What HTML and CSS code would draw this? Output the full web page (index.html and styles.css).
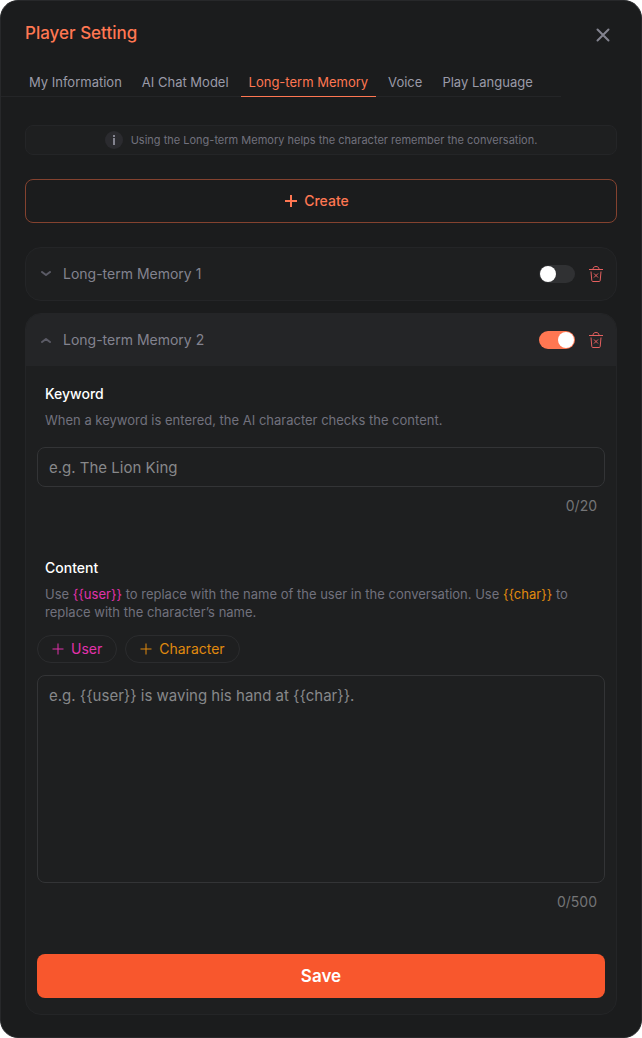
FILE: index.html
```
<!DOCTYPE html>
<html lang="en">

<head>
    <meta charset="UTF-8">
    <meta name="viewport" content="width=device-width, initial-scale=1.0">
    <title>Player Setting</title>
    <link rel="stylesheet" href="styles.css">
</head>

<body>
    <div class="modal">
        <header class="modal-header">
            <h1 class="modal-title">Player Setting</h1>
            <button class="icon-btn close-btn" type="button" aria-label="Close">
                <svg width="14" height="14" viewBox="0 0 14 14" fill="none" stroke="#83838f" stroke-width="2" stroke-linecap="round">
                    <path d="M1.5 1.5l11 11M12.5 1.5l-11 11" />
                </svg>
            </button>
        </header>

        <nav class="tabs">
            <a class="tab" href="#">My Information</a>
            <a class="tab" href="#">AI Chat Model</a>
            <a class="tab active" href="#">Long-term Memory</a>
            <a class="tab" href="#">Voice</a>
            <a class="tab" href="#">Play Language</a>
        </nav>

        <main class="content">
            <p class="notice">
                <svg width="18" height="18" viewBox="0 0 18 18">
                    <circle cx="9" cy="9" r="9" fill="#2b2b2f" />
                    <path d="M8 4h2v2H8zM8 7h2v7H8z" fill="#83838f" />
                </svg>
                Using the Long-term Memory helps the character remember the conversation.
            </p>

            <button class="create-btn" type="button">
                <svg width="12" height="12" viewBox="0 0 12 12" stroke="currentColor" stroke-width="2">
                    <path d="M6 0v12M0 6h12" />
                </svg>
                Create
            </button>

            <div class="memory-list">
                <section class="memory">
                    <div class="memory-header">
                        <button class="memory-toggle" type="button" aria-expanded="false">
                            <svg width="10" height="6" viewBox="0 0 10 6" fill="none" stroke="#5b5b66" stroke-width="2" stroke-linecap="round" stroke-linejoin="round">
                                <path d="M1 1l4 3 4-3" />
                            </svg>
                            Long-term Memory 1
                        </button>
                        <input class="switch" type="checkbox" aria-label="Use Long-term Memory 1">
                        <button class="icon-btn" type="button" aria-label="Delete Long-term Memory 1">
                            <svg width="14" height="16" viewBox="0 0 14 16" fill="none" stroke="#e5605f">
                                <path d="M0 3.5h14M4 3.5C4 1.5 5 .5 7 .5s3 1 3 3M2 5.5l.8 9q.1 1 1 1h6.4q.9 0 1-1l.8-9M5 7.5l4 4M9 7.5l-4 4" />
                            </svg>
                        </button>
                    </div>
                </section>

                <section class="memory open">
                    <div class="memory-header">
                        <button class="memory-toggle" type="button" aria-expanded="true">
                            <svg width="10" height="6" viewBox="0 0 10 6" fill="none" stroke="#5b5b66" stroke-width="2" stroke-linecap="round" stroke-linejoin="round">
                                <path d="M1 5l4-3 4 3" />
                            </svg>
                            Long-term Memory 2
                        </button>
                        <input class="switch" type="checkbox" aria-label="Use Long-term Memory 2" checked>
                        <button class="icon-btn" type="button" aria-label="Delete Long-term Memory 2">
                            <svg width="14" height="16" viewBox="0 0 14 16" fill="none" stroke="#e5605f">
                                <path d="M0 3.5h14M4 3.5C4 1.5 5 .5 7 .5s3 1 3 3M2 5.5l.8 9q.1 1 1 1h6.4q.9 0 1-1l.8-9M5 7.5l4 4M9 7.5l-4 4" />
                            </svg>
                        </button>
                    </div>

                    <form class="memory-body">
                        <div class="field">
                            <label class="field-label" for="keyword">Keyword</label>
                            <p class="field-desc">When a keyword is entered, the AI character checks the content.</p>
                            <input class="text-box" id="keyword" type="text" maxlength="20" placeholder="e.g. The Lion King">
                            <span class="counter">0/20</span>
                        </div>

                        <div class="field">
                            <label class="field-label" for="content">Content</label>
                            <p class="field-desc">Use <span class="user">{{user}}</span> to replace with the name of the user in the conversation. Use <span class="char">{{char}}</span> to replace with the character’s name.</p>
                            <div class="chips">
                                <button class="chip user" type="button">
                                    <svg width="12" height="12" viewBox="0 0 12 12" stroke="currentColor">
                                        <path d="M6 .5v11M.5 6h11" />
                                    </svg>
                                    User
                                </button>
                                <button class="chip char" type="button">
                                    <svg width="12" height="12" viewBox="0 0 12 12" stroke="currentColor">
                                        <path d="M6 .5v11M.5 6h11" />
                                    </svg>
                                    Character
                                </button>
                            </div>
                            <textarea class="text-box text-area" id="content" maxlength="500" placeholder="e.g. {{user}} is waving his hand at {{char}}."></textarea>
                            <span class="counter">0/500</span>
                        </div>

                        <button class="save-btn" type="submit">Save</button>
                    </form>
                </section>
            </div>
        </main>
    </div>
</body>

</html>
```

FILE: styles.css
```
* {
    margin: 0;
    padding: 0;
    box-sizing: border-box;
}

body {
    background-color: #fff;
    color: #83838f;
    font-family: Inter, "Liberation Sans", sans-serif;
    font-size: 14px;
    line-height: 18px;
}

button,
input,
textarea {
    font: inherit;
    color: inherit;
}

button {
    border: none;
    background: none;
    cursor: pointer;
}

svg {
    display: block;
    flex: none;
}

.modal {
    min-height: 100vh;
    border: 1px solid #27282a;
    border-radius: 18px;
    background-color: #1b1c1d;
}

.modal-header {
    display: flex;
    align-items: flex-end;
    justify-content: space-between;
    padding: 20px 28px 0 24px;
}

.modal-title {
    color: #ff7752;
    font-size: 17px;
    font-weight: 500;
    line-height: 24px;
}

.close-btn {
    padding: 3px;
}

/* tabs */
.tabs {
    display: flex;
    gap: 4px;
    margin-right: 80px;
    padding: 28px 0 0 20px;
    border-bottom: 1px solid #242527;
}

.tab {
    margin-bottom: -1px;
    padding: 0 8px 5px;
    border-bottom: 1px solid transparent;
    color: #9a9aa8;
    font-size: 13px;
    text-decoration: none;
    white-space: nowrap;
}

.tab.active {
    border-color: #ff7752;
    color: #ff7752;
}

.content {
    display: flex;
    flex-direction: column;
    gap: 24px;
    padding: 28px 24px 22px;
}

.notice {
    display: flex;
    align-items: center;
    justify-content: center;
    gap: 8px;
    padding: 5px;
    border: 1px solid #242527;
    border-radius: 8px;
    background-color: #1e1f20;
    color: #71717d;
    font-size: 11px;
}

.create-btn {
    display: flex;
    align-items: center;
    justify-content: center;
    gap: 7px;
    height: 44px;
    padding-right: 8px;
    border: 1px solid #84422f;
    border-radius: 8px;
    color: #ff7752;
    font-weight: 500;
}

/* memory cards */
.memory-list {
    display: flex;
    flex-direction: column;
    gap: 12px;
}

.memory {
    border: 1px solid #242527;
    border-radius: 16px;
    background-color: #1e1f20;
    overflow: hidden;
}

.memory-header {
    display: flex;
    align-items: center;
    gap: 14px;
    height: 52px;
    padding: 0 13px 0 15px;
}

.memory.open .memory-header {
    background-color: #242527;
}

.memory-toggle {
    display: flex;
    flex: 1;
    align-items: center;
    gap: 12px;
    text-align: left;
}

.switch {
    flex: none;
    width: 36px;
    height: 18px;
    padding: 1px;
    border-radius: 9px;
    background-color: #303133;
    appearance: none;
    cursor: pointer;
}

.switch::before {
    content: "";
    display: block;
    width: 16px;
    height: 16px;
    border-radius: 50%;
    background-color: #fff;
}

.switch:checked {
    background-color: #ff7752;
}

.switch:checked::before {
    margin-left: auto;
}

.memory-body {
    display: flex;
    flex-direction: column;
    gap: 43px;
    padding: 18px 11px 16px;
}

.field {
    display: flex;
    flex-direction: column;
}

.field-label {
    padding: 0 8px;
    color: #fff;
    font-weight: 500;
    line-height: 20px;
}

.field-desc {
    margin-top: 7px;
    padding: 0 8px;
    color: #71717d;
    font-size: 13px;
}

.text-box {
    width: 100%;
    height: 40px;
    margin-top: 18px;
    padding: 0 11px;
    border: 1px solid #333436;
    border-radius: 8px;
    background: none;
    color: #fff;
    font-size: 15px;
    outline: none;
}

.text-box::placeholder {
    color: #87888a;
    opacity: 1;
}

.text-area {
    height: 208px;
    margin-top: 12px;
    padding: 10px 11px;
    line-height: 20px;
    resize: none;
}

.counter {
    margin-top: 10px;
    padding: 0 8px;
    color: #747577;
    text-align: right;
}

.chips {
    display: flex;
    gap: 8px;
    margin-top: 14px;
}

.chip {
    display: flex;
    align-items: center;
    gap: 7px;
    height: 28px;
    padding: 0 14px;
    border: 1px solid #2b2c2e;
    border-radius: 14px;
}

.user {
    color: #e132ab;
}

.char {
    color: #e08a0e;
}

.save-btn {
    height: 44px;
    border-radius: 8px;
    background-color: #f8572d;
    color: #fff;
    font-size: 17px;
    font-weight: 600;
}
```
